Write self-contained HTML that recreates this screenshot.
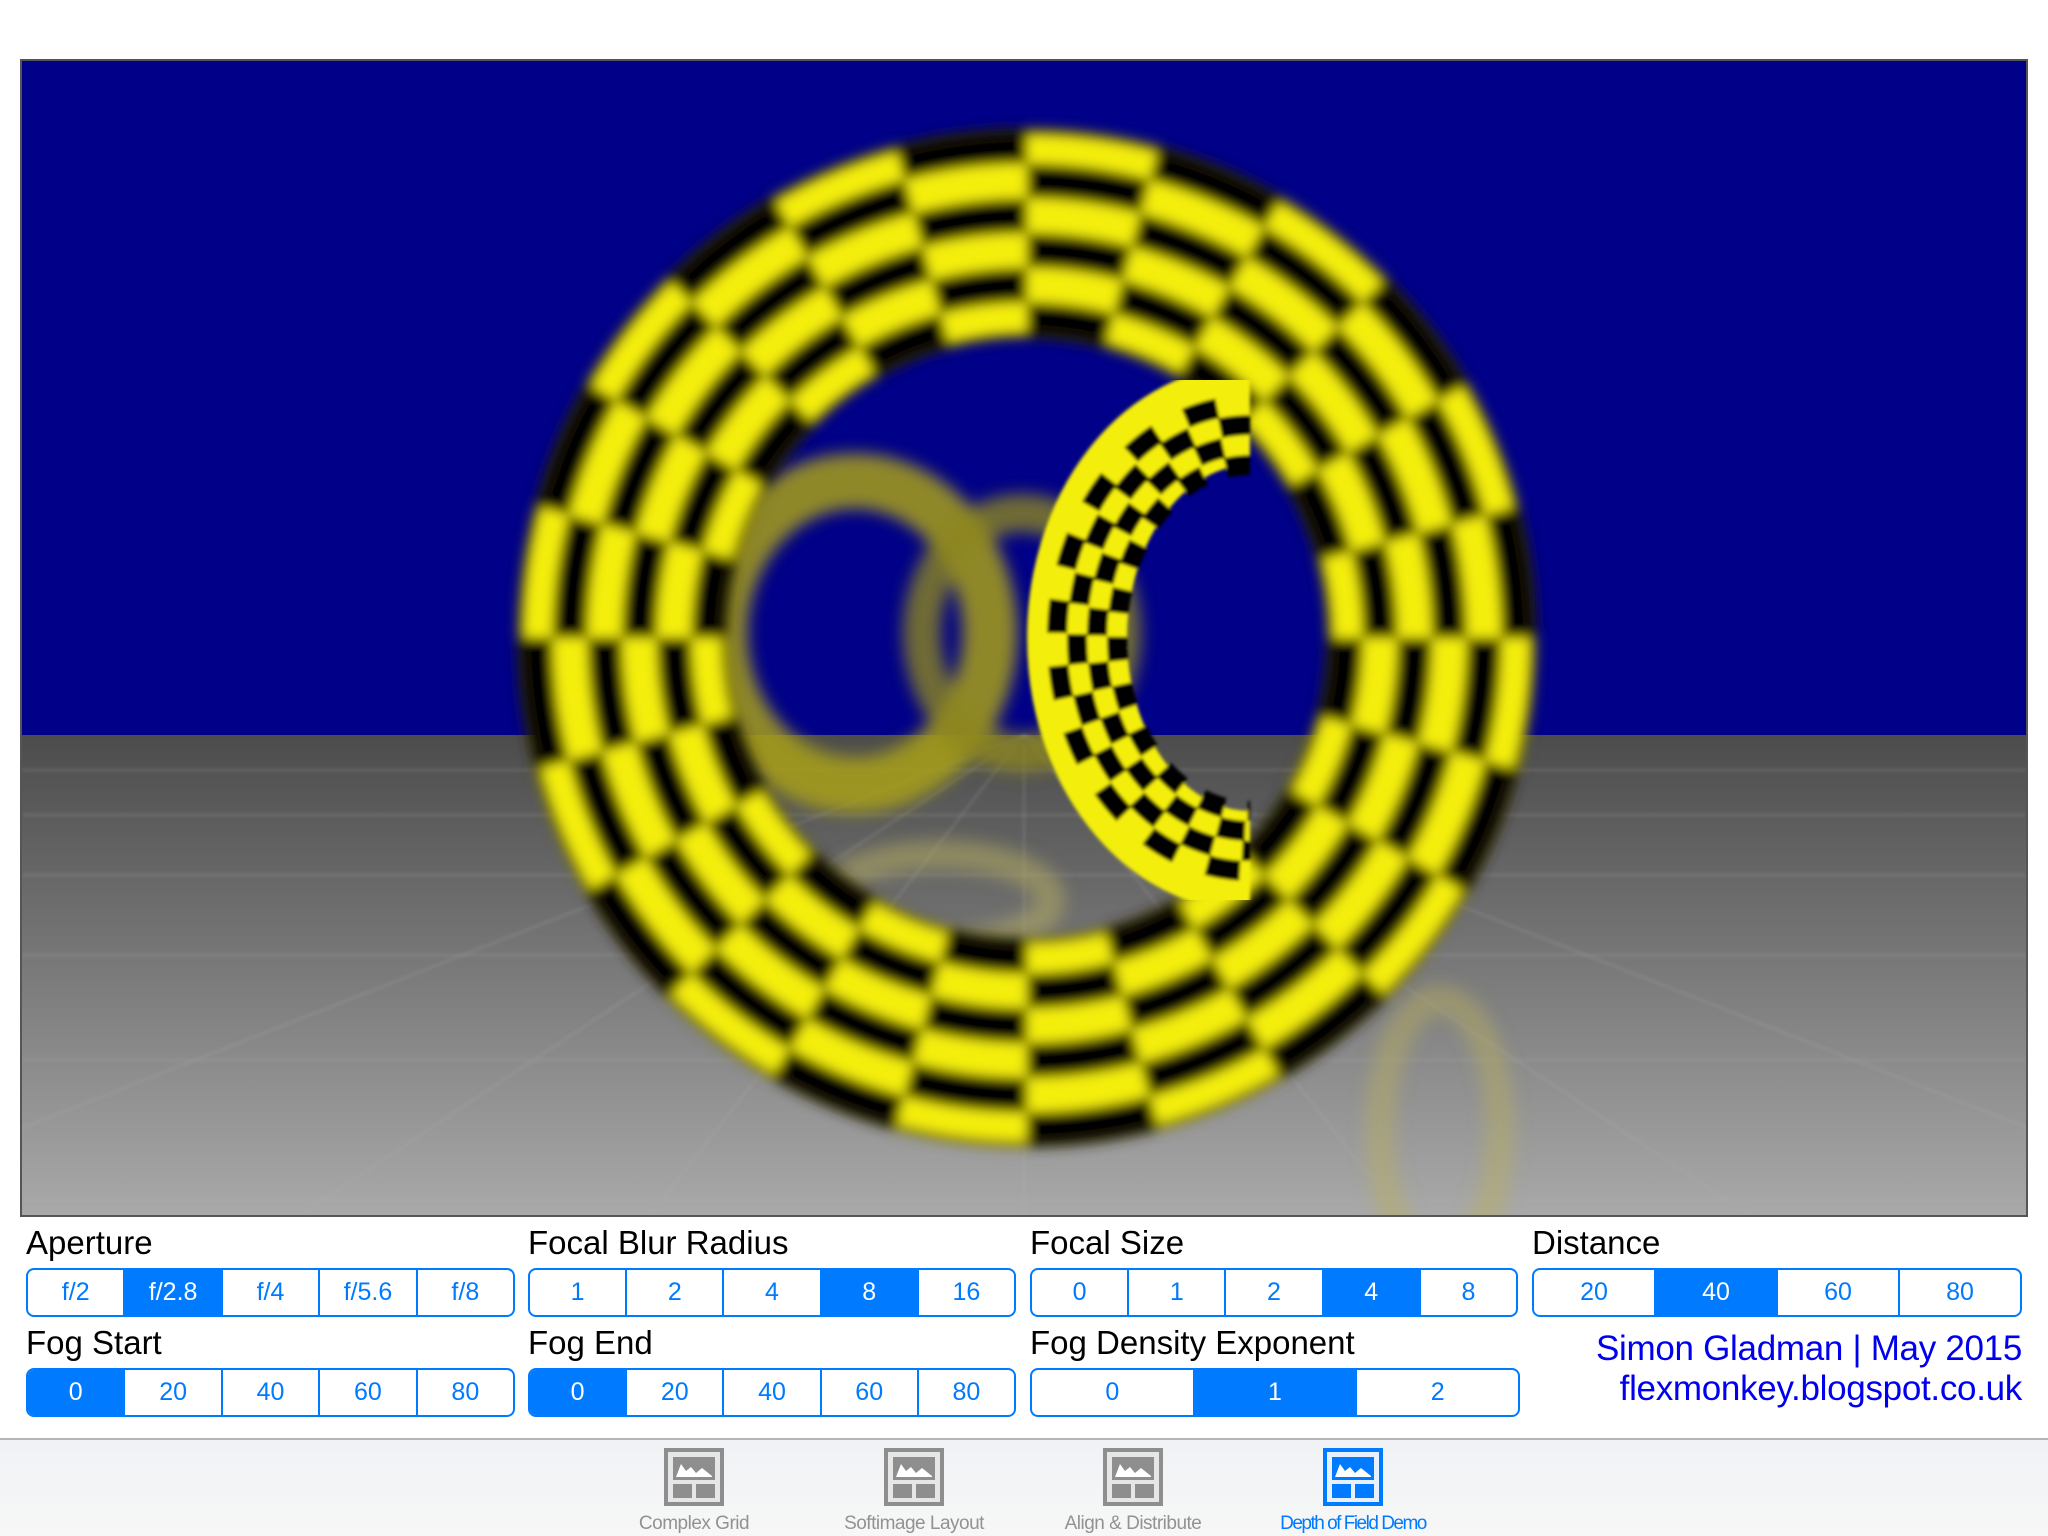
<!DOCTYPE html>
<html><head><meta charset="utf-8">
<style>
*{margin:0;padding:0;box-sizing:border-box}
body{width:2048px;height:1536px;background:#fff;position:relative;overflow:hidden;font-family:"Liberation Sans",sans-serif}
.lbl{position:absolute;font-size:33px;color:#000;line-height:1}
.seg{position:absolute;height:49px;border:2px solid #007aff;border-radius:8px;display:flex;overflow:hidden}
.seg div{flex:1;display:flex;align-items:center;justify-content:center;color:#007aff;font-size:25px;border-left:2px solid #007aff}
.seg div:first-child{border-left:none}
.seg div.on{background:#007aff;color:#fff}
.cred{position:absolute;right:26px;color:#0000ee;font-size:35px;line-height:1;text-align:right;letter-spacing:-0.3px}
.tab{position:absolute;top:1438px;left:0;width:2048px;height:98px;background:linear-gradient(#f0f2f5,#f7f7f7);border-top:2px solid #b4b4b4}
.ti{position:absolute;top:8px;width:200px;text-align:center;font-size:19px;color:#929292}
.ti svg{display:block;margin:0 auto}
.ti span{display:block;margin-top:7px;letter-spacing:-0.5px}
</style></head><body>
<svg style="position:absolute;left:0;top:0" width="2048" height="1230" viewBox="0 0 2048 1230">
<defs>
<linearGradient id="fl" x1="0" y1="0" x2="0" y2="1"><stop offset="0" stop-color="#4c4c4c"/><stop offset="1" stop-color="#a9a9a9"/></linearGradient>
<filter id="b5" x="-10%" y="-10%" width="120%" height="120%"><feGaussianBlur stdDeviation="6"/></filter>
<filter id="b9" x="-20%" y="-20%" width="140%" height="140%"><feGaussianBlur stdDeviation="8"/></filter>
<filter id="b1"><feGaussianBlur stdDeviation="1.5"/></filter>
<filter id="b2" filterUnits="userSpaceOnUse" x="850" y="350" width="500" height="600"><feGaussianBlur stdDeviation="1.5"/></filter>
<clipPath id="vp"><rect x="22" y="61" width="2004" height="1154"/></clipPath>
<clipPath id="sm"><rect x="900" y="380" width="370" height="520"/></clipPath>
</defs>
<g clip-path="url(#vp)">
<rect x="22" y="61" width="2004" height="1154" fill="#000088"/>
<rect x="22" y="735" width="2004" height="480" fill="url(#fl)"/>
<g stroke="#b0b0b0" stroke-opacity="0.25" stroke-width="2" filter="url(#b1)">
<line x1="22" y1="770" x2="2026" y2="770"/><line x1="22" y1="815" x2="2026" y2="815"/><line x1="22" y1="875" x2="2026" y2="875"/><line x1="22" y1="955" x2="2026" y2="955"/><line x1="22" y1="1060" x2="2026" y2="1060"/><line x1="22" y1="1200" x2="2026" y2="1200"/>
<line x1="1024" y1="735" x2="1024" y2="1215"/><line x1="1024" y1="735" x2="-200" y2="1215"/><line x1="1024" y1="735" x2="300" y2="1215"/><line x1="1024" y1="735" x2="650" y2="1215"/><line x1="1024" y1="735" x2="1400" y2="1215"/><line x1="1024" y1="735" x2="1750" y2="1215"/><line x1="1024" y1="735" x2="2250" y2="1215"/>
</g>
<g filter="url(#b9)" fill="none">
<ellipse cx="855" cy="633" rx="135" ry="152" stroke="#a8a018" stroke-width="55" opacity="0.85"/>
<ellipse cx="1022" cy="633" rx="100" ry="120" stroke="#8c8620" stroke-width="38" opacity="0.8"/>
<ellipse cx="940" cy="900" rx="110" ry="45" stroke="#b8b060" stroke-width="30" opacity="0.5"/>
<ellipse cx="1440" cy="1130" rx="60" ry="130" stroke="#b8b060" stroke-width="30" opacity="0.45"/>
</g>
<g filter="url(#b5)" fill="none" transform="rotate(-90 1027 638)">
<circle cx="1027" cy="638" r="405" stroke="#f4ee10" stroke-width="208"/>
<circle cx="1027" cy="638" r="318.3" stroke="#000" stroke-width="34.7" stroke-dasharray="83.33 83.33"/>
<circle cx="1027" cy="638" r="353" stroke="#000" stroke-width="34.7" stroke-dasharray="92.41 92.41" stroke-dashoffset="92.41"/>
<circle cx="1027" cy="638" r="387.7" stroke="#000" stroke-width="34.7" stroke-dasharray="101.5 101.5"/>
<circle cx="1027" cy="638" r="422.3" stroke="#000" stroke-width="34.7" stroke-dasharray="110.56 110.56" stroke-dashoffset="110.56"/>
<circle cx="1027" cy="638" r="457" stroke="#000" stroke-width="34.7" stroke-dasharray="119.64 119.64"/>
<circle cx="1027" cy="638" r="491.7" stroke="#000" stroke-width="34.7" stroke-dasharray="128.73 128.73" stroke-dashoffset="128.73"/>
<circle cx="1027" cy="638" r="303" stroke="#3a3400" stroke-width="8" opacity="0.6"/>
<circle cx="1027" cy="638" r="506" stroke="#3a3400" stroke-width="8" opacity="0.6"/>
</g>
<g clip-path="url(#sm)"><g fill="none" filter="url(#b2)">
<path d="M1250 415 A173 223 0 0 0 1250 861" stroke="#f4ee10" stroke-width="100"/>
<path d="M1250 465 A133 173 0 0 0 1250 811" stroke="#000" stroke-width="20" stroke-dasharray="24 24"/>
<path d="M1250 445 A153 193 0 0 0 1250 831" stroke="#000" stroke-width="20" stroke-dasharray="27 27" stroke-dashoffset="27"/>
<path d="M1250 425 A173 213 0 0 0 1250 851" stroke="#000" stroke-width="20" stroke-dasharray="30 30"/>
<path d="M1250 405 A193 233 0 0 0 1250 871" stroke="#000" stroke-width="20" stroke-dasharray="33 33" stroke-dashoffset="33"/>
</g></g>
</g>
<rect x="21" y="60" width="2006" height="1156" fill="none" stroke="#555" stroke-width="2"/>
</svg>

<div class="lbl" style="left:26px;top:1226px">Aperture</div>
<div class="lbl" style="left:528px;top:1226px">Focal Blur Radius</div>
<div class="lbl" style="left:1030px;top:1226px">Focal Size</div>
<div class="lbl" style="left:1532px;top:1226px">Distance</div>
<div class="lbl" style="left:26px;top:1326px">Fog Start</div>
<div class="lbl" style="left:528px;top:1326px">Fog End</div>
<div class="lbl" style="left:1030px;top:1326px">Fog Density Exponent</div>

<div class="seg" style="left:26px;top:1268px;width:489px"><div>f/2</div><div class="on">f/2.8</div><div>f/4</div><div>f/5.6</div><div>f/8</div></div>
<div class="seg" style="left:528px;top:1268px;width:488px"><div>1</div><div>2</div><div>4</div><div class="on">8</div><div>16</div></div>
<div class="seg" style="left:1030px;top:1268px;width:488px"><div>0</div><div>1</div><div>2</div><div class="on">4</div><div>8</div></div>
<div class="seg" style="left:1532px;top:1268px;width:490px"><div>20</div><div class="on">40</div><div>60</div><div>80</div></div>
<div class="seg" style="left:26px;top:1368px;width:489px"><div class="on">0</div><div>20</div><div>40</div><div>60</div><div>80</div></div>
<div class="seg" style="left:528px;top:1368px;width:488px"><div class="on">0</div><div>20</div><div>40</div><div>60</div><div>80</div></div>
<div class="seg" style="left:1030px;top:1368px;width:490px"><div>0</div><div class="on">1</div><div>2</div></div>

<div class="cred" style="top:1331px">Simon Gladman | May 2015</div>
<div class="cred" style="top:1371px">flexmonkey.blogspot.co.uk</div>

<div class="tab">
<div class="ti" style="left:594px"><svg width="60" height="58" viewBox="0 0 60 58"><rect x="2" y="2" width="56" height="54" fill="#e6e6e6" stroke="#8e8e8e" stroke-width="4"/><rect x="9" y="9" width="42" height="23" fill="#8e8e8e"/><path d="M12 29 L17 16 L22 23 L27 19 L32 25 L38 20 L48 28 L48 29 Z" fill="#fff"/><rect x="9" y="36" width="19" height="14" fill="#8e8e8e"/><rect x="32" y="36" width="19" height="14" fill="#8e8e8e"/></svg><span>Complex Grid</span></div>
<div class="ti" style="left:814px"><svg width="60" height="58" viewBox="0 0 60 58"><rect x="2" y="2" width="56" height="54" fill="#e6e6e6" stroke="#8e8e8e" stroke-width="4"/><rect x="9" y="9" width="42" height="23" fill="#8e8e8e"/><path d="M12 29 L17 16 L22 23 L27 19 L32 25 L38 20 L48 28 L48 29 Z" fill="#fff"/><rect x="9" y="36" width="19" height="14" fill="#8e8e8e"/><rect x="32" y="36" width="19" height="14" fill="#8e8e8e"/></svg><span>Softimage Layout</span></div>
<div class="ti" style="left:1033px"><svg width="60" height="58" viewBox="0 0 60 58"><rect x="2" y="2" width="56" height="54" fill="#e6e6e6" stroke="#8e8e8e" stroke-width="4"/><rect x="9" y="9" width="42" height="23" fill="#8e8e8e"/><path d="M12 29 L17 16 L22 23 L27 19 L32 25 L38 20 L48 28 L48 29 Z" fill="#fff"/><rect x="9" y="36" width="19" height="14" fill="#8e8e8e"/><rect x="32" y="36" width="19" height="14" fill="#8e8e8e"/></svg><span>Align &amp; Distribute</span></div>
<div class="ti" style="left:1253px;color:#007aff"><svg width="60" height="58" viewBox="0 0 60 58"><rect x="2" y="2" width="56" height="54" fill="#e8f0fb" stroke="#007aff" stroke-width="4"/><rect x="9" y="9" width="42" height="23" fill="#007aff"/><path d="M12 29 L17 16 L22 23 L27 19 L32 25 L38 20 L48 28 L48 29 Z" fill="#fff"/><rect x="9" y="36" width="19" height="14" fill="#007aff"/><rect x="32" y="36" width="19" height="14" fill="#007aff"/></svg><span style="letter-spacing:-1.5px">Depth of Field Demo</span></div>
</div>
</body></html>
